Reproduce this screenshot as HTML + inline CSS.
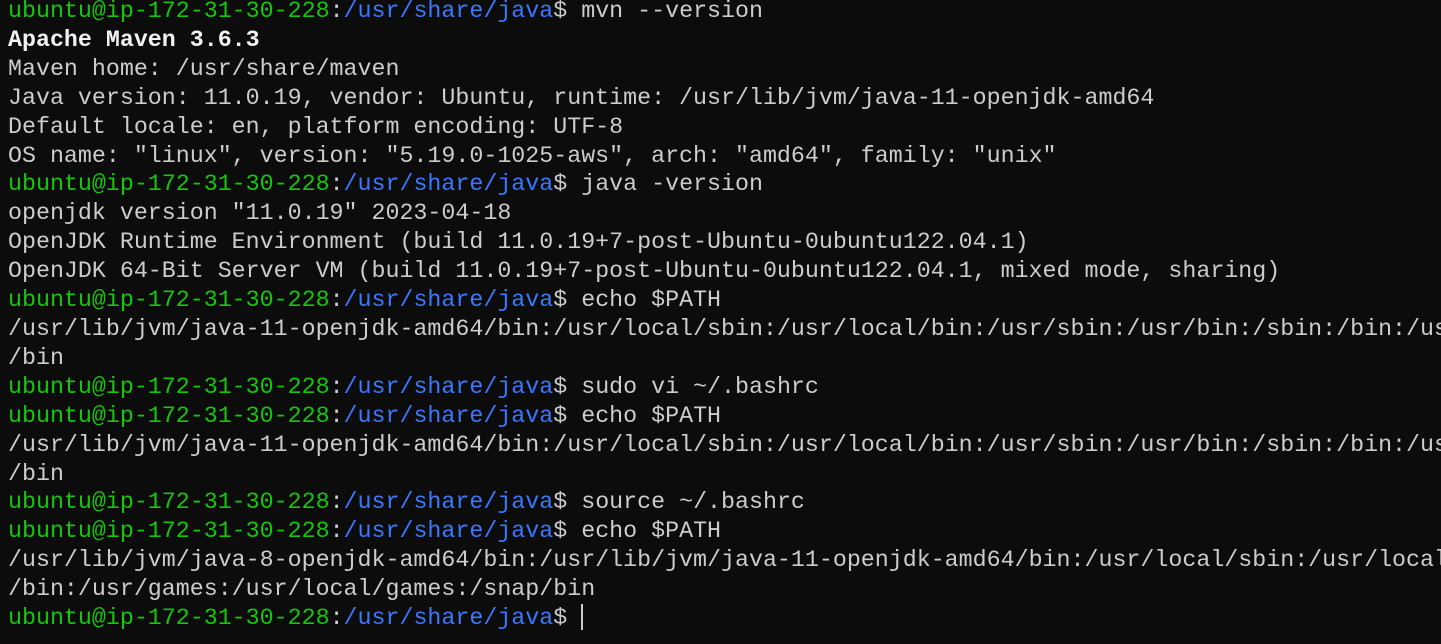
<!DOCTYPE html>
<html><head><style>
html,body{margin:0;padding:0;background:#0c0c0c;width:1441px;height:644px;overflow:hidden}
pre{margin:0;position:absolute;left:8px;top:-3px;font-family:"Liberation Mono",monospace;font-size:23.3px;line-height:28.9px;color:#cccccc;white-space:pre}
.g{color:#16c60c}.b{color:#3b78ff}.w{color:#f2f2f2;font-weight:bold}
.c{display:inline-block;width:2px;height:26px;background:#cccccc;vertical-align:-6px;margin-left:14px}
</style></head><body><pre><span class="g">ubuntu@ip-172-31-30-228</span>:<span class="b">/usr/share/java</span>$ mvn --version
<span class="w">Apache Maven 3.6.3</span>
Maven home: /usr/share/maven
Java version: 11.0.19, vendor: Ubuntu, runtime: /usr/lib/jvm/java-11-openjdk-amd64
Default locale: en, platform encoding: UTF-8
OS name: "linux", version: "5.19.0-1025-aws", arch: "amd64", family: "unix"
<span class="g">ubuntu@ip-172-31-30-228</span>:<span class="b">/usr/share/java</span>$ java -version
openjdk version "11.0.19" 2023-04-18
OpenJDK Runtime Environment (build 11.0.19+7-post-Ubuntu-0ubuntu122.04.1)
OpenJDK 64-Bit Server VM (build 11.0.19+7-post-Ubuntu-0ubuntu122.04.1, mixed mode, sharing)
<span class="g">ubuntu@ip-172-31-30-228</span>:<span class="b">/usr/share/java</span>$ echo $PATH
/usr/lib/jvm/java-11-openjdk-amd64/bin:/usr/local/sbin:/usr/local/bin:/usr/sbin:/usr/bin:/sbin:/bin:/us
/bin
<span class="g">ubuntu@ip-172-31-30-228</span>:<span class="b">/usr/share/java</span>$ sudo vi ~/.bashrc
<span class="g">ubuntu@ip-172-31-30-228</span>:<span class="b">/usr/share/java</span>$ echo $PATH
/usr/lib/jvm/java-11-openjdk-amd64/bin:/usr/local/sbin:/usr/local/bin:/usr/sbin:/usr/bin:/sbin:/bin:/us
/bin
<span class="g">ubuntu@ip-172-31-30-228</span>:<span class="b">/usr/share/java</span>$ source ~/.bashrc
<span class="g">ubuntu@ip-172-31-30-228</span>:<span class="b">/usr/share/java</span>$ echo $PATH
/usr/lib/jvm/java-8-openjdk-amd64/bin:/usr/lib/jvm/java-11-openjdk-amd64/bin:/usr/local/sbin:/usr/local
/bin:/usr/games:/usr/local/games:/snap/bin
<span class="g">ubuntu@ip-172-31-30-228</span>:<span class="b">/usr/share/java</span>$<span class="c"></span></pre></body></html>
